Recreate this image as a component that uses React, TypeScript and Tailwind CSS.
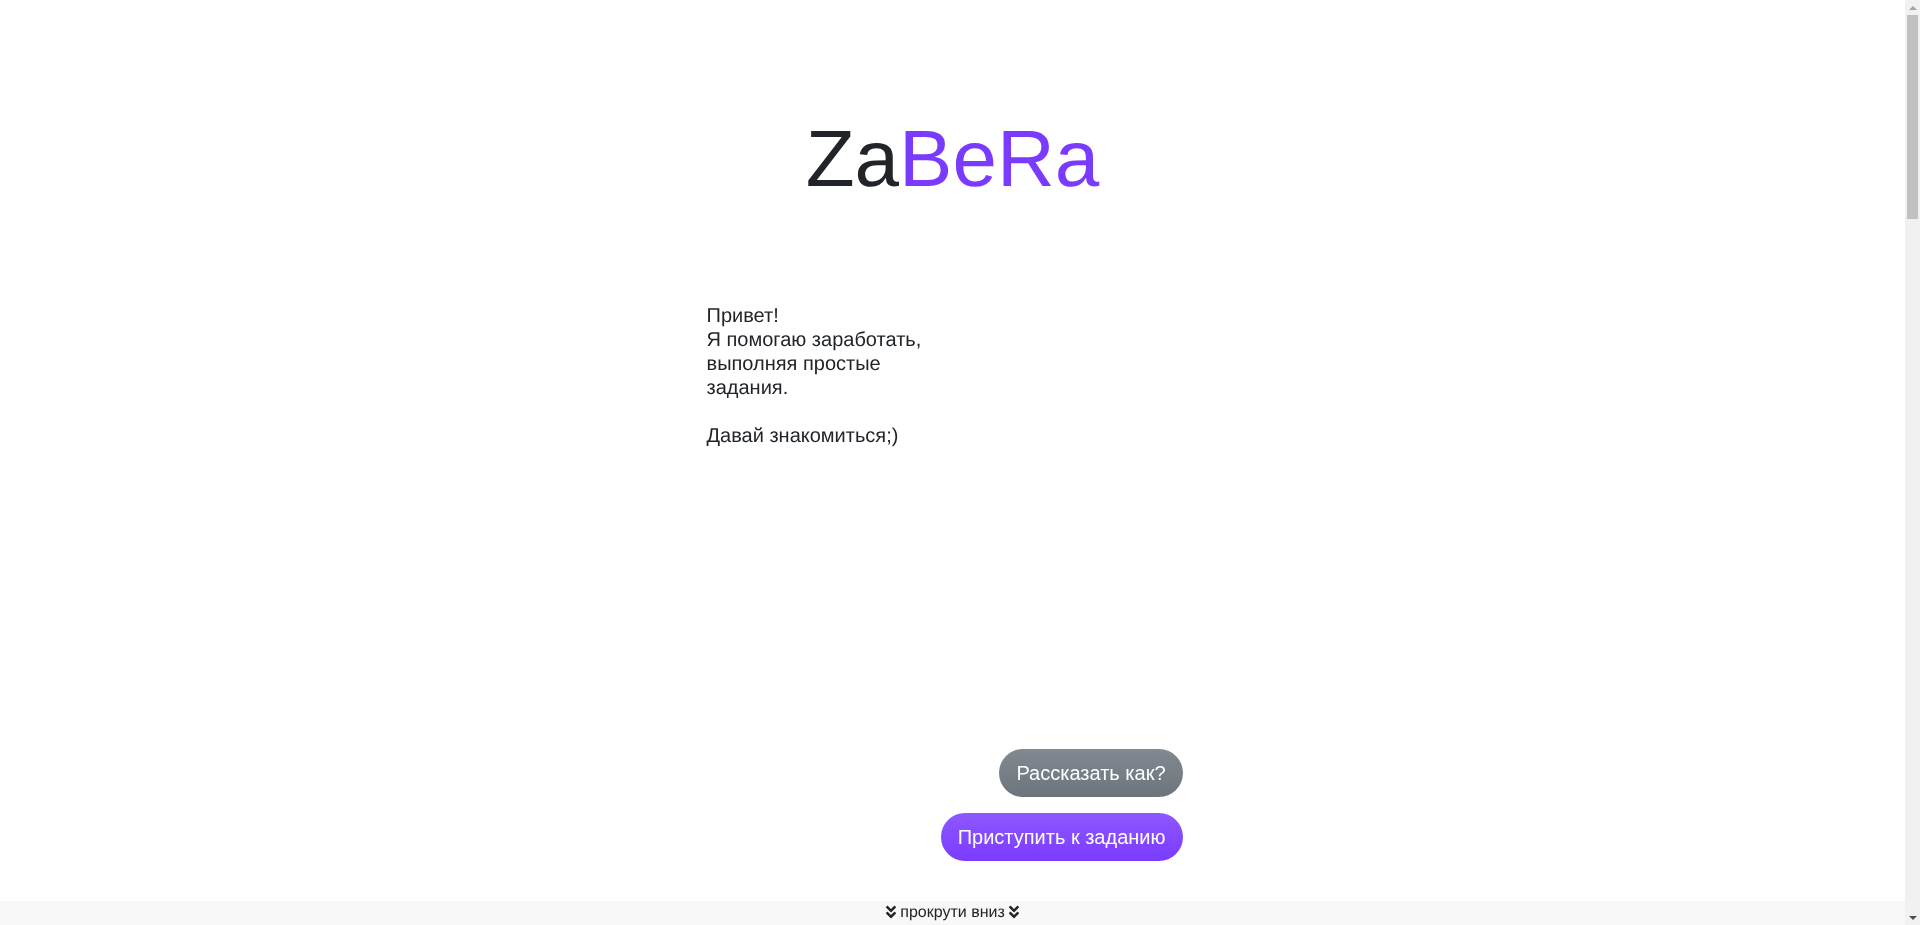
import { FaAngleDoubleDown } from "react-icons/fa";

const FONT = "font-['Liberation_Sans',Arial,sans-serif] [text-rendering:geometricPrecision]";

function Scrollbar() {
  return (
    <div className="flex h-full w-[15px] shrink-0 flex-col items-center bg-[#f1f1f1]">
      <div className="flex h-[15px] items-center justify-center">
        <svg viewBox="0 0 8 4" className="h-1 w-2 fill-[#a3a3a3]">
          <path d="M4 0 8 4H0z" />
        </svg>
      </div>
      <div className="h-[204px] w-[11px] bg-[#c1c1c1]" />
      <div className="flex-1" />
      <div className="flex h-[15px] items-center justify-center">
        <svg viewBox="0 0 8 4" className="h-1 w-2 fill-[#505050]">
          <path d="M0 0H8L4 4z" />
        </svg>
      </div>
    </div>
  );
}

export default function App() {
  return (
    <div className={`${FONT} flex h-[925px] overflow-hidden bg-white text-[#212529]`}>
      <div className="flex min-w-0 flex-1 flex-col [will-change:transform]">
        <div className="mx-auto flex w-[492px] flex-1 flex-col pr-4">
          <h1 className="pt-[111px] pl-4 text-center text-[80px] leading-[96px] font-light">
            Za<span className="text-[#7a3bff]">BeRa</span>
          </h1>
          <p className="mt-[97px] text-[20px] leading-[24px]">
            Привет!
            <br />
            Я помогаю заработать,
            <br />
            выполняя простые
            <br />
            задания.
            <br />
            <br />
            Давай знакомиться;)
          </p>
          <div className="mt-[301px] flex flex-col items-end gap-4">
            <button
              type="button"
              className="h-12 rounded-full bg-[#6c757d] bg-gradient-to-b from-white/15 to-white/0 px-[17px] text-[20px] text-white"
            >
              Рассказать как?
            </button>
            <button
              type="button"
              className="h-12 rounded-full bg-[#7a3bff] bg-gradient-to-b from-white/15 to-white/0 px-[17px] text-[20px] text-white"
            >
              Приступить к заданию
            </button>
          </div>
        </div>
        <div className="flex h-6 shrink-0 items-center justify-center gap-1 bg-[#f8f8f8] text-[16px]">
          <FaAngleDoubleDown className="-mt-0.5 h-4 w-[10px]" />
          <span>прокрути вниз</span>
          <FaAngleDoubleDown className="-mt-0.5 h-4 w-[10px]" />
        </div>
      </div>
      <Scrollbar />
    </div>
  );
}
